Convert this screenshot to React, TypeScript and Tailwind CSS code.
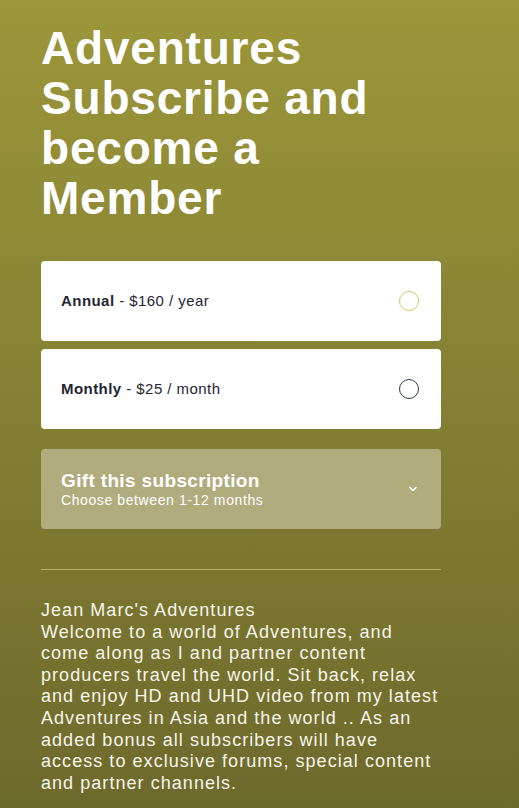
import React, { useState } from 'react'

const plans = [
    { id: 'annual', name: 'Annual', price: '$160 / year' },
    { id: 'monthly', name: 'Monthly', price: '$25 / month' },
];

export default function App() {
    const [selected, setSelected] = useState('annual');

    return (
        <div
            className="min-h-[808px] w-full bg-gradient-to-b from-[#9c973a] to-[#6b682c] px-[41px] pt-[23px] pb-10 text-white"
            style={{ fontFamily: '"Liberation Sans", Arial, sans-serif' }}
        >
            <div className="w-[400px]">
                <h1 className="text-[46px] font-bold leading-[50px] tracking-[0.8px]">
                    Adventures Subscribe and become a Member
                </h1>

                <div className="mt-[38px] flex flex-col gap-[8px]">
                    {plans.map((plan) => (
                        <button
                            key={plan.id}
                            onClick={() => setSelected(plan.id)}
                            className="flex h-[80px] w-full items-center justify-between rounded-[4px] bg-white pl-[20px] pr-[22px] text-left text-[15px] tracking-[0.45px] text-[#1f2533]"
                        >
                            <span>
                                <span className="font-bold">{plan.name}</span> - {plan.price}
                            </span>
                            <span
                                className={
                                    selected === plan.id
                                        ? 'h-[20px] w-[20px] rounded-full border border-[#cfc86a]'
                                        : 'h-[20px] w-[20px] rounded-full border border-[#333845]'
                                }
                            />
                        </button>
                    ))}
                </div>

                <div className="mt-[20px] flex h-[80px] items-center justify-between rounded-[4px] bg-[#b0ac7e] pl-[20px] pr-[24px]">
                    <div className="flex flex-col">
                        <span className="text-[19px] font-bold leading-[22px] tracking-[0.35px]">Gift this subscription</span>
                        <span className="text-[14px] leading-[17px] tracking-[0.6px]">Choose between 1-12 months</span>
                    </div>
                    <svg width="8" height="6" viewBox="0 0 8 6" fill="none">
                        <path d="M1 1.5 L4 4.5 L7 1.5" stroke="white" strokeWidth="1.6" strokeLinecap="round" strokeLinejoin="round" />
                    </svg>
                </div>

                <hr className="mt-[40px] border-0 border-t border-[#b3ad69]" />

                <p className="mt-[30px] text-[18px] leading-[21.6px] tracking-[1.05px] text-[#f7f5ea]">
                    Jean Marc's Adventures
                    <br />
                    Welcome to a world of Adventures, and come along as I and partner content producers travel the world. Sit back, relax and enjoy HD and UHD video from my latest Adventures in Asia and the world .. As an added bonus all subscribers will have access to exclusive forums, special content and partner channels.
                </p>
            </div>
        </div>
    );
}
